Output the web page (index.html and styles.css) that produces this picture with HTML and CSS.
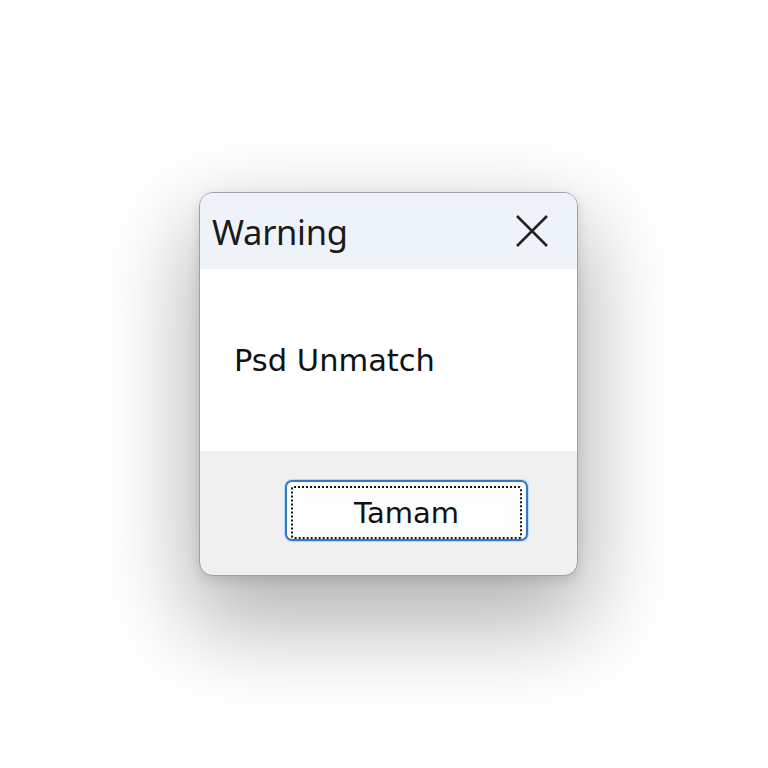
FILE: index.html
```html
<!DOCTYPE html>
<html lang="tr">
<head>
  <meta charset="UTF-8">
  <title>Warning</title>
  <link rel="stylesheet" href="styles.css">
</head>
<body>
  <div class="dialog">
    <div class="titlebar">
      <span class="title">Warning</span>
      <svg class="close" width="34" height="34" viewBox="0 0 34 34">
        <path d="M2 2 L32 32 M32 2 L2 32" stroke="#222" stroke-width="2.6" fill="none"/>
      </svg>
    </div>
    <div class="content">
      <p class="message">Psd Unmatch</p>
    </div>
    <div class="footer">
      <button class="ok"><span class="focus">Tamam</span></button>
    </div>
  </div>
</body>
</html>
```

FILE: styles.css
```css
html {
  height: 100%;
  background: #fff;
}

body {
  margin: 0;
  min-height: 768px;
  box-sizing: border-box;
  padding: 192px 0 0 199px;
  font-family: "Open Sans", sans-serif;
}

.dialog {
  width: 377px;
  height: 382px;
  border: 1px solid #a0a0a0;
  border-radius: 14px;
  overflow: hidden;
  display: flex;
  flex-direction: column;
  box-shadow: 0 40px 90px 10px rgba(0, 0, 0, 0.3), 0 4px 12px rgba(0, 0, 0, 0.12);
  background: #f0f0f0;
}

.titlebar {
  height: 76px;
  background: #eef3f9;
  display: flex;
  align-items: center;
  justify-content: space-between;
  padding: 0 28px 0 12px;
}

.title {
  font-family: "Noto Sans", sans-serif;
  font-size: 34.5px;
  color: #1a1a1a;
  letter-spacing: -0.3px;
}

.content {
  height: 182px;
  background: #fff;
  display: flex;
  align-items: center;
}

.message {
  margin: 0 0 0 34px;
  font-family: "DejaVu Sans", sans-serif;
  font-size: 30.5px;
  color: #111;
}

.footer {
  flex: 1;
  display: flex;
  align-items: flex-start;
  padding: 29px 0 0 85px;
}

.ok {
  width: 243px;
  height: 61px;
  padding: 4px;
  border: 2px solid #3578c4;
  border-radius: 7px;
  background: #fdfdfd;
  box-shadow: 0 0 0 1px #b8dcf8;
}

.focus {
  display: flex;
  align-items: center;
  justify-content: center;
  height: 100%;
  border: 2.5px dotted #1a1a1a;
  border-radius: 3px;
  font-family: "DejaVu Sans", sans-serif;
  font-size: 29px;
  color: #111;
}
```
